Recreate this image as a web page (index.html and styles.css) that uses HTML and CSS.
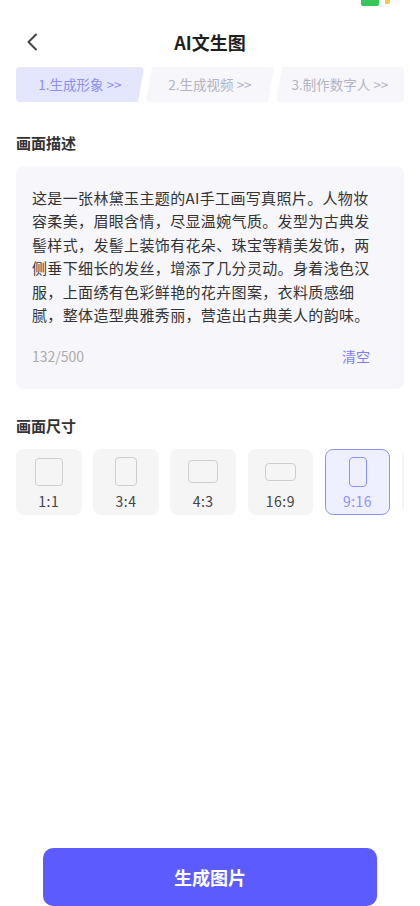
FILE: index.html
```html
<!DOCTYPE html>
<html lang="zh-CN">

<head>
    <meta charset="UTF-8">
    <meta name="viewport" content="width=device-width, initial-scale=1.0">
    <title>AI文生图</title>
    <link rel="stylesheet" href="styles.css">
</head>

<body>
    <div class="page">
        <!-- status bar, mostly cut off at the top -->
        <div class="status-bar">
            <span class="battery"></span>
            <span class="bolt"></span>
        </div>

        <header class="nav">
            <a class="nav-back" href="#">
                <svg width="12" height="18" viewBox="0 0 12 18">
                    <path d="M10 1.5 L2.5 9 L10 16.5" fill="none" stroke="#444" stroke-width="2"
                        stroke-linecap="round" stroke-linejoin="round" />
                </svg>
            </a>
            <h1 class="nav-title">AI文生图</h1>
        </header>

        <div class="steps">
            <div class="step step-first active">1.生成形象 &gt;&gt;</div>
            <div class="step step-mid">2.生成视频 &gt;&gt;</div>
            <div class="step step-last">3.制作数字人 &gt;&gt;</div>
        </div>

        <section class="block">
            <h2 class="block-title">画面描述</h2>
            <div class="prompt">
                <p class="prompt-text">这是一张林黛玉主题的AI手工画写真照片。人物妆容柔美，眉眼含情，尽显温婉气质。发型为古典发髻样式，发髻上装饰有花朵、珠宝等精美发饰，两侧垂下细长的发丝，增添了几分灵动。身着浅色汉服，上面绣有色彩鲜艳的花卉图案，衣料质感细腻，整体造型典雅秀丽，营造出古典美人的韵味。</p>
                <div class="prompt-foot">
                    <span class="prompt-count">132/500</span>
                    <a class="prompt-clear" href="#">清空</a>
                </div>
            </div>
        </section>

        <section class="block block-size">
            <h2 class="block-title">画面尺寸</h2>
            <div class="sizes">
                <div class="size">
                    <div class="size-icon"><span class="frame r-1-1"></span></div>
                    <span class="size-label">1:1</span>
                </div>
                <div class="size">
                    <div class="size-icon"><span class="frame r-3-4"></span></div>
                    <span class="size-label">3:4</span>
                </div>
                <div class="size">
                    <div class="size-icon"><span class="frame r-4-3"></span></div>
                    <span class="size-label">4:3</span>
                </div>
                <div class="size">
                    <div class="size-icon"><span class="frame r-16-9"></span></div>
                    <span class="size-label">16:9</span>
                </div>
                <div class="size selected">
                    <div class="size-icon"><span class="frame r-9-16"></span></div>
                    <span class="size-label">9:16</span>
                </div>
                <!-- next option, scrolled out of view -->
                <div class="size"></div>
            </div>
        </section>

        <div class="actions">
            <button class="btn-primary" type="button">生成图片</button>
        </div>
    </div>
</body>

</html>
```

FILE: styles.css
```css
/* AI text-to-image page */

* {
    box-sizing: border-box;
}

body {
    margin: 0;
    background: #fff;
    font-family: "Noto Sans CJK SC", "Noto Sans", sans-serif;
    color: #333;
}

.page {
    display: flex;
    flex-direction: column;
    width: 420px;
    height: 906px;
    overflow: hidden;
}

/* status bar */

.status-bar {
    display: flex;
    justify-content: flex-end;
    align-items: flex-start;
    gap: 6px;
    height: 20px;
    padding-right: 30px;
}

.battery {
    width: 18px;
    height: 6px;
    background: #35c759;
    border-radius: 0 0 2px 2px;
}

.bolt {
    width: 5px;
    height: 4px;
    background: #f5c84a;
    border-radius: 0 0 2px 1px;
}

/* nav */

.nav {
    position: relative;
    display: flex;
    align-items: center;
    justify-content: center;
    height: 44px;
}

.nav-back {
    position: absolute;
    left: 26px;
    top: 13px;
    display: flex;
}

.nav-title {
    margin: 0;
    font-size: 18px;
    font-weight: 700;
    color: #1f1f1f;
    line-height: 24px;
}

/* steps */

.steps {
    display: flex;
    gap: 2px;
    margin: 3px 16px 0;
}

.step {
    flex: 1;
    height: 35px;
    line-height: 35px;
    text-align: center;
    font-size: 13.5px;
    color: #b3b3c4;
    background: #f6f6fb;
    border-radius: 4px;
}

.step-first {
    clip-path: polygon(0 0, 100% 0, calc(100% - 6px) 100%, 0 100%);
}

.step-mid {
    clip-path: polygon(6px 0, 100% 0, calc(100% - 6px) 100%, 0 100%);
}

.step-last {
    clip-path: polygon(6px 0, 100% 0, 100% 100%, 0 100%);
}

.step.active {
    background: #e4e6fd;
    color: #8a8ef2;
}

/* blocks */

.block {
    margin: 30px 16px 0;
}

.block-size {
    margin-top: 26px;
}

.block-title {
    margin: 0;
    font-size: 15px;
    font-weight: 700;
    line-height: 21px;
    color: #333;
}

.prompt {
    margin-top: 13px;
    padding: 20px 30px 23px 16px;
    background: #f6f6fb;
    border-radius: 8px;
}

.prompt-text {
    margin: 0;
    font-size: 15px;
    letter-spacing: 0.35px;
    line-height: 23.4px;
    color: #333;
}

.prompt-foot {
    display: flex;
    justify-content: space-between;
    align-items: center;
    margin-top: 20px;
    padding-right: 4px;
    line-height: 20px;
}

.prompt-count {
    font-size: 14px;
    color: #ababab;
}

.prompt-clear {
    font-size: 14px;
    color: #7a7ef7;
    text-decoration: none;
}

/* sizes */

.sizes {
    display: flex;
    gap: 11.7px;
    margin-top: 13px;
    overflow-x: auto;
    scrollbar-width: none;
}

.size {
    flex: 0 0 65.5px;
    display: flex;
    flex-direction: column;
    align-items: center;
    gap: 5px;
    height: 66px;
    padding-top: 6px;
    background: #f5f5f5;
    border: 1.5px solid transparent;
    border-radius: 8px;
}

.size-icon {
    display: flex;
    align-items: center;
    justify-content: center;
    height: 31px;
}

.frame {
    display: block;
    border: 1.5px solid #cdcdcd;
    border-radius: 4px;
}

.r-1-1 {
    width: 28px;
    height: 28px;
}

.r-3-4 {
    width: 22px;
    height: 29px;
}

.r-4-3 {
    width: 30px;
    height: 23px;
}

.r-16-9 {
    width: 31px;
    height: 18px;
}

.r-9-16 {
    width: 18px;
    height: 30px;
}

.size-label {
    font-size: 14px;
    line-height: 18px;
    letter-spacing: 0.5px;
    color: #444;
}

.size.selected {
    background: #eef0ff;
    border-color: #8e92f8;
}

.size.selected .frame {
    border-color: #8e92f8;
}

.size.selected .size-label {
    color: #8e92f8;
}

/* bottom button */

.actions {
    margin-top: auto;
    padding: 0 43px;
}

.btn-primary {
    display: block;
    width: 100%;
    height: 58px;
    border: 0;
    border-radius: 10px;
    background: #5c5bfe;
    color: #fff;
    font-family: inherit;
    font-size: 18px;
    font-weight: 700;
    padding-bottom: 2px;
}
```
